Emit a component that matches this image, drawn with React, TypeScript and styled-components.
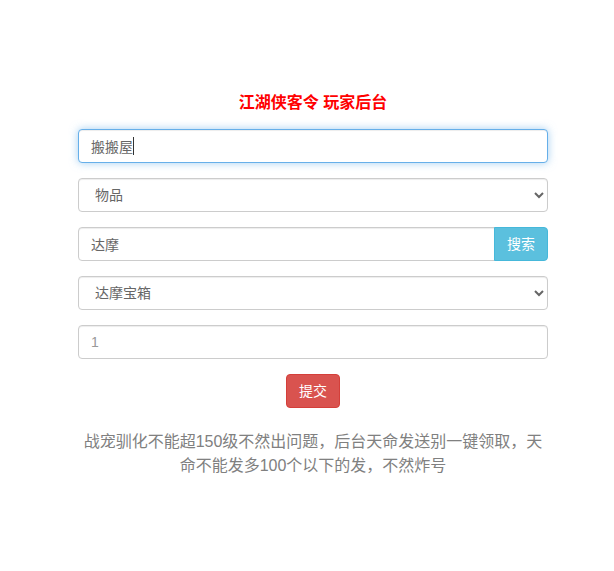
import React from 'react';
import styled, { createGlobalStyle, css } from 'styled-components';

const GlobalStyle = createGlobalStyle`
  html, body {
    margin: 0;
    padding: 0;
    background: #ffffff;
  }
  body {
    font-family: "Liberation Sans", "Noto Sans CJK SC", sans-serif;
    font-size: 14px;
    line-height: 1.42857143;
    color: #333;
  }
  * {
    box-sizing: border-box;
  }
`;

const Shell = styled.div`
  padding-left: 12px;
`;

const Page = styled.div`
  width: 470px;
  margin: 0 auto;
  padding-top: 93px;
`;

const Title = styled.h3`
  margin: 0 0 16px;
  font-size: 16px;
  line-height: 20px;
  font-weight: bold;
  color: #ff0000;
  text-align: center;
`;

const Form = styled.form`
  display: flex;
  flex-direction: column;
  gap: 15px;
`;

const Field = styled.div`
  position: relative;
`;

const controlStyles = css<{ $focused?: boolean }>`
  display: block;
  width: 100%;
  height: 34px;
  padding: 6px 12px;
  font-family: inherit;
  font-size: 14px;
  line-height: 1.42857143;
  color: #666;
  background-color: #fff;
  border: 1px solid #ccc;
  border-radius: 4px;
  box-shadow: inset 0 1px 1px rgba(0, 0, 0, 0.075);
  outline: none;

  &::placeholder {
    color: #999;
  }

  ${({ $focused }) =>
    $focused &&
    css`
      border-color: #66afe9;
      box-shadow: inset 0 1px 1px rgba(0, 0, 0, 0.075),
        0 0 8px rgba(102, 175, 233, 0.6);
    `}
`;

const Input = styled.input<{ $focused?: boolean }>`
  ${controlStyles}
`;

const Select = styled.select`
  ${controlStyles}
`;

const Caret = styled.span`
  position: absolute;
  left: 55px;
  top: 8px;
  width: 1px;
  height: 18px;
  background: #333;
`;

const InputGroup = styled.div`
  display: flex;

  ${Input} {
    flex: 1;
    border-top-right-radius: 0;
    border-bottom-right-radius: 0;
  }
`;

const Button = styled.button<{ $variant: 'info' | 'danger' }>`
  display: inline-block;
  height: 34px;
  padding: 6px 12px;
  font-family: inherit;
  font-size: 14px;
  line-height: 1.42857143;
  color: #fff;
  border: 1px solid;
  border-radius: 4px;
  cursor: pointer;
  white-space: nowrap;

  ${({ $variant }) =>
    $variant === 'info'
      ? css`
          background-color: #5bc0de;
          border-color: #46b8da;
        `
      : css`
          background-color: #d9534f;
          border-color: #d43f3a;
        `}
`;

const AddonButton = styled(Button)`
  margin-left: -1px;
  border-top-left-radius: 0;
  border-bottom-left-radius: 0;
`;

const Actions = styled.div`
  display: flex;
  justify-content: center;
`;

const Note = styled.p`
  margin: 22px 0 0;
  font-size: 16px;
  line-height: 24px;
  color: #808080;
  text-align: center;
`;

export default function App() {
  return (
    <>
      <GlobalStyle />
      <Shell>
        <Page>
          <Title>江湖侠客令 玩家后台</Title>
          <Form onSubmit={(e) => e.preventDefault()}>
            <Field>
              <Input $focused defaultValue="搬搬屋" />
              <Caret />
            </Field>
            <Select defaultValue="物品">
              <option value="物品">物品</option>
              <option value="宠物">宠物</option>
            </Select>
            <InputGroup>
              <Input defaultValue="达摩" />
              <AddonButton type="button" $variant="info">
                搜索
              </AddonButton>
            </InputGroup>
            <Select defaultValue="达摩宝箱">
              <option value="达摩宝箱">达摩宝箱</option>
            </Select>
            <Input placeholder="1" />
            <Actions>
              <Button type="submit" $variant="danger">
                提交
              </Button>
            </Actions>
          </Form>
          <Note>
            战宠驯化不能超150级不然出问题，后台天命发送别一键领取，天命不能发多100个以下的发，不然炸号
          </Note>
        </Page>
      </Shell>
    </>
  );
}
